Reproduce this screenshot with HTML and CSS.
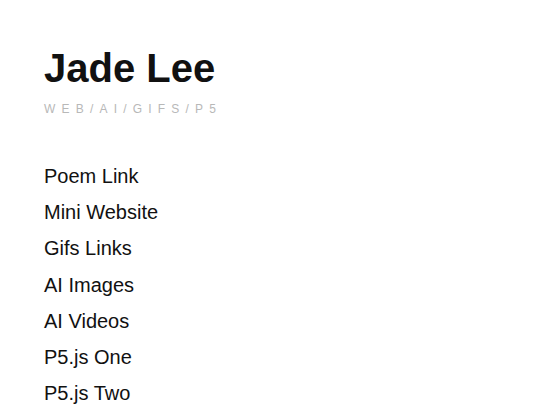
FILE: index.html
```html
<!DOCTYPE html>
<html>
<head>
<meta charset="utf-8">
<link rel="stylesheet" href="styles.css">
</head>
<body>
<main class="page">
  <header class="intro">
    <h1 class="name">Jade Lee</h1>
    <p class="tagline">WEB/AI/GIFS/P5</p>
  </header>
  <ul class="links">
    <li><a href="#">Poem Link</a></li>
    <li><a href="#">Mini Website</a></li>
    <li><a href="#">Gifs Links</a></li>
    <li><a href="#">AI Images</a></li>
    <li><a href="#">AI Videos</a></li>
    <li><a href="#">P5.js One</a></li>
    <li><a href="#">P5.js Two</a></li>
  </ul>
</main>
</body>
</html>
```
FILE: styles.css
```css
html, body {
  margin: 0;
  padding: 0;
  background: #ffffff;
}
body {
  font-family: "Liberation Sans", Arial, sans-serif;
  color: #111111;
}
.page {
  padding: 48px 0 0 44px;
}
.intro {
  display: flex;
  flex-direction: column;
  gap: 15px;
}
.name {
  margin: 0;
  font-size: 40px;
  line-height: 1;
  font-weight: 700;
  letter-spacing: 0;
  color: #111111;
}
.tagline {
  margin: 0;
  font-size: 12px;
  line-height: 1;
  letter-spacing: 6.2px;
  color: #b8b8b8;
}
.links {
  list-style: none;
  margin: 43px 0 0 0;
  padding: 0;
}
.links li {
  font-size: 20px;
  line-height: 36.2px;
}
.links a {
  color: #111111;
  text-decoration: none;
}
```
